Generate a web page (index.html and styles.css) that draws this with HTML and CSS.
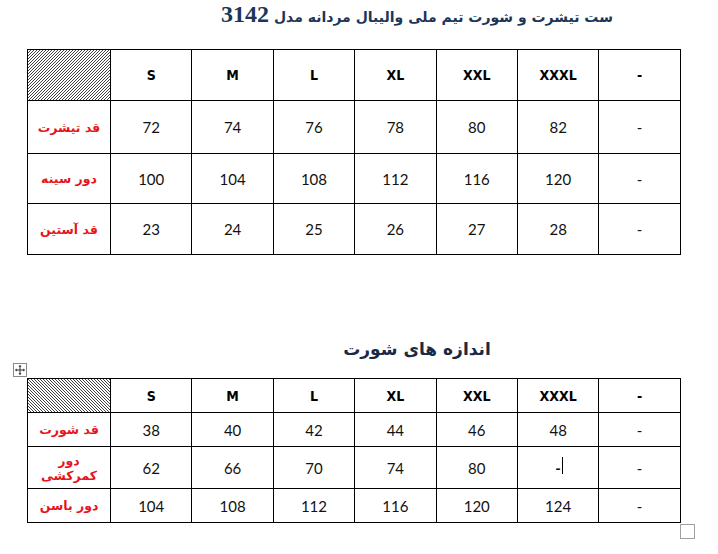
FILE: index.html
```html
<!DOCTYPE html>
<html lang="fa">
<head>
<meta charset="utf-8">
<title>سایز</title>
<link rel="stylesheet" href="styles.css">
</head>
<body>
<div class="page">
  <h1 class="title title-main" dir="rtl">ست تیشرت و شورت تیم ملی والیبال مردانه مدل <span class="num">3142</span></h1>
  <table class="grid grid-1">
    <colgroup><col class="c-label"><col><col><col><col><col><col><col></colgroup>
    <tr class="head">
      <td class="hatch"><svg class="hatch-svg" preserveAspectRatio="none"><defs><pattern id="hu" width="3" height="3" patternUnits="userSpaceOnUse"><path d="M-1 1L1 -1M0 3L3 0M2 4L4 2" stroke="#111" stroke-width="0.8"/></pattern></defs><rect width="100%" height="100%" fill="url(#hu)"/></svg></td><td>S</td><td>M</td><td>L</td><td>XL</td><td>XXL</td><td>XXXL</td><td>-</td>
    </tr>
    <tr class="r1"><td class="label" dir="rtl">قد تیشرت</td><td>72</td><td>74</td><td>76</td><td>78</td><td>80</td><td>82</td><td>-</td></tr>
    <tr class="r2"><td class="label" dir="rtl">دور سینه</td><td>100</td><td>104</td><td>108</td><td>112</td><td>116</td><td>120</td><td>-</td></tr>
    <tr class="r3"><td class="label" dir="rtl">قد آستین</td><td>23</td><td>24</td><td>25</td><td>26</td><td>27</td><td>28</td><td>-</td></tr>
  </table>

  <h2 class="title title-sub" dir="rtl">اندازه های شورت</h2>
  <div class="table-wrap">
    <span class="move-handle"><svg width="14" height="14" viewBox="0 0 14 14"><rect x="0.5" y="0.5" width="13" height="13" fill="#fff" stroke="#8a8a8a"/><path d="M7 2.5v9M2.5 7h9" stroke="#333" stroke-width="1"/><path d="M7 2l-1.6 1.8h3.2zM7 12l-1.6-1.8h3.2zM2 7l1.8-1.6v3.2zM12 7l-1.8-1.6v3.2z" fill="#333"/></svg></span>
    <table class="grid grid-2">
      <colgroup><col class="c-label"><col><col><col><col><col><col><col></colgroup>
      <tr class="head">
        <td class="hatch"><svg class="hatch-svg" preserveAspectRatio="none"><defs><pattern id="hd" width="3" height="3" patternUnits="userSpaceOnUse"><path d="M-1 2L1 4M0 0L3 3M2 -1L4 1" stroke="#111" stroke-width="0.8"/></pattern></defs><rect width="100%" height="100%" fill="url(#hd)"/></svg></td><td>S</td><td>M</td><td>L</td><td>XL</td><td>XXL</td><td>XXXL</td><td>-</td>
      </tr>
      <tr class="s1"><td class="label" dir="rtl">قد شورت</td><td>38</td><td>40</td><td>42</td><td>44</td><td>46</td><td>48</td><td>-</td></tr>
      <tr class="s2"><td class="label" dir="rtl">دور<br>کمرکشی</td><td>62</td><td>66</td><td>70</td><td>74</td><td>80</td><td><span class="cursor-cell">-<span class="caret"></span></span></td><td>-</td></tr>
      <tr class="s3"><td class="label" dir="rtl">دور باسن</td><td>104</td><td>108</td><td>112</td><td>116</td><td>120</td><td>124</td><td>-</td></tr>
    </table>
    <span class="resize-handle"></span>
  </div>
</div>
</body>
</html>
```
FILE: styles.css
```css
html, body {
  margin: 0;
  padding: 0;
  background: #fff;
}
.page {
  width: 718px;
  height: 554px;
  position: relative;
  overflow: hidden;
}
.title {
  margin: 0 0 0 152px;
  width: 530px;
  text-align: center;
  font-family: "DejaVu Sans", sans-serif;
  font-weight: bold;
  color: #1d3557;
}
.title-main {
  font-size: 14px;
  line-height: 22px;
  padding-top: 3px;
  height: 24px;
}
.title-main .num {
  font-family: "Liberation Serif", "DejaVu Serif", serif;
  font-size: 24px;
}
.title-sub {
  font-size: 17px;
  line-height: 20px;
  color: #1a2a44;
  margin-top: 84px;
  height: 20px;
}
.grid {
  border-collapse: collapse;
  table-layout: fixed;
  width: 653px;
  margin-left: 27px;
}
.grid-1 { margin-top: 22px; }
.grid col { width: 81.4px; }
.grid col.c-label { width: 83px; }
.grid td {
  border: 1px solid #000;
  text-align: center;
  vertical-align: middle;
  padding: 0;
  font-family: Lato, "Liberation Sans", sans-serif;
  font-size: 15px;
  color: #111;
}
.grid .head td {
  font-family: "DejaVu Sans Condensed", "DejaVu Sans", sans-serif;
  font-weight: bold;
  font-size: 14px;
  color: #000;
}
.grid td.label {
  font-family: "DejaVu Sans", sans-serif;
  font-weight: bold;
  font-size: 12.5px;
  color: #e8141b;
  line-height: 15px;
}
.grid td.hatch {
  line-height: 0;
}
.hatch-svg {
  display: block;
  width: 100%;
  height: 100%;
}
.grid-1 .hatch-svg { height: 50px; }
.grid-2 .hatch-svg { height: 33px; }
.grid-1 .head td { height: 50px; }
.grid-1 .r1 td { height: 52px; }
.grid-1 .r2 td { height: 49px; }
.grid-1 .r3 td { height: 50px; }
.grid-2 .head td { height: 33px; }
.grid-2 .s1 td { height: 33px; }
.grid-2 .s2 td { height: 41px; }
.grid-2 .s3 td { height: 33px; }
.table-wrap {
  position: relative;
  margin-top: 19px;
}
.move-handle {
  position: absolute;
  left: 13px;
  top: -15px;
  width: 14px;
  height: 14px;
  line-height: 0;
}
.resize-handle {
  position: absolute;
  left: 680px;
  bottom: -16px;
  width: 13px;
  height: 13px;
  border: 1px solid #a0a0a0;
  background: #fff;
}
.cursor-cell {
  position: relative;
  display: inline-block;
  font-weight: bold;
}
.caret {
  position: absolute;
  left: 100%;
  top: -2px;
  width: 1px;
  height: 17px;
  background: #000;
  margin-left: 1px;
}
```
